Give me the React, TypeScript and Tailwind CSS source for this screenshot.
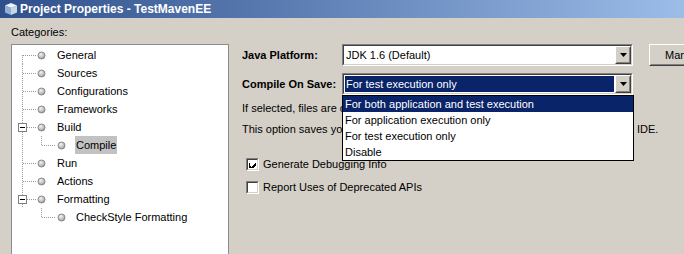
import React from "react";

const FONT = { fontFamily: '"Liberation Sans", Arial, sans-serif' };

function Bullet({ cx }: { cx: number }) {
  return (
    <g>
      <circle cx={cx} cy={9.5} r={3.5} fill="url(#bg)" stroke="#8a8a8a" strokeWidth={1} />
    </g>
  );
}

type Row = {
  label: string;
  level: 0 | 1;
  first?: boolean;
  lastTop?: boolean;
  expand?: boolean;
  parentContinues?: boolean;
  selected?: boolean;
};

const rows: Row[] = [
  { label: "General", level: 0, first: true },
  { label: "Sources", level: 0 },
  { label: "Configurations", level: 0 },
  { label: "Frameworks", level: 0 },
  { label: "Build", level: 0, expand: true },
  { label: "Compile", level: 1, parentContinues: true, selected: true },
  { label: "Run", level: 0 },
  { label: "Actions", level: 0 },
  { label: "Formatting", level: 0, expand: true, lastTop: true },
  { label: "CheckStyle Formatting", level: 1, parentContinues: false },
];

function TreeGlyph({ row }: { row: Row }) {
  const dot = { stroke: "#9a9a9a", strokeWidth: 1, strokeDasharray: "1 1", shapeRendering: "crispEdges" as const };
  if (row.level === 0) {
    return (
      <svg width={44} height={18} className="shrink-0">
        {row.expand ? (
          <>
            {!row.first && <line x1={10.5} y1={0} x2={10.5} y2={5} {...dot} />}
            <line x1={10.5} y1={14} x2={10.5} y2={18} {...dot} />
          </>
        ) : (
          <line x1={10.5} y1={row.first ? 9 : 0} x2={10.5} y2={row.lastTop ? 9 : 18} {...dot} />
        )}
        {row.expand ? (
          <>
            <rect x={6.5} y={5.5} width={8} height={8} fill="white" stroke="#808080" shapeRendering="crispEdges" />
            <line x1={8} y1={9.5} x2={13} y2={9.5} stroke="#000" shapeRendering="crispEdges" />
            <line x1={15} y1={9.5} x2={24} y2={9.5} {...dot} />
          </>
        ) : (
          <line x1={11} y1={9.5} x2={24} y2={9.5} {...dot} />
        )}
        <Bullet cx={29.5} />
      </svg>
    );
  }
  return (
    <svg width={63} height={18} className="shrink-0">
      {row.parentContinues && <line x1={10.5} y1={0} x2={10.5} y2={18} {...dot} />}
      <line x1={29.5} y1={0} x2={29.5} y2={9} {...dot} />
      <line x1={30} y1={9.5} x2={44} y2={9.5} {...dot} />
      <Bullet cx={49.5} />
    </svg>
  );
}

function ArrowButton() {
  return (
    <div className="w-[16px] h-full shrink-0 border border-t-white border-l-white border-b-[#404040] border-r-[#404040] bg-[#d4d0c8]">
      <div className="w-full h-full flex items-center justify-center border border-transparent border-b-[#808080] border-r-[#808080]">
        <svg width={7} height={4}>
          <polygon points="0,0 7,0 3.5,4" fill="#000" />
        </svg>
      </div>
    </div>
  );
}

function Combo({ value, selected, children }: { value: string; selected?: boolean; children?: React.ReactNode }) {
  return (
    <div className="relative shrink-0 w-[291px] h-[22px] border border-t-[#808080] border-l-[#808080] border-b-white border-r-white">
      <div className="flex h-full border border-t-[#404040] border-l-[#404040] border-b-[#d4d0c8] border-r-[#d4d0c8] bg-white">
        <div className="flex-1 flex p-px">
          <div
            className={
              "flex-1 flex items-center pl-[1px] " + (selected ? "bg-[#0a246a] text-white" : "text-black")
            }
          >
            {value}
          </div>
        </div>
        <ArrowButton />
      </div>
      {children}
    </div>
  );
}

function Checkbox({ checked }: { checked?: boolean }) {
  return (
    <div className="w-[13px] h-[13px] shrink-0 border border-t-[#808080] border-l-[#808080] border-b-white border-r-white">
      <div className="w-full h-full bg-white border border-t-[#404040] border-l-[#404040] border-b-[#d4d0c8] border-r-[#d4d0c8] flex items-center justify-center">
        {checked && (
          <svg width={7} height={7} shapeRendering="crispEdges">
            <path d="M0 2h1v3h1v1h1v-1h1v-1h1v-1h1v-1h1v3h-1v1h-1v1h-1v1h-1v1h-1v-1h-1v-1h-1z" fill="#000" />
          </svg>
        )}
      </div>
    </div>
  );
}

export default function App() {
  return (
    <div className="w-[684px] h-[254px] overflow-hidden bg-[#d4d0c8] text-[11px] text-black" style={FONT}>
      <svg width={0} height={0} className="absolute">
        <defs>
          <radialGradient id="bg" cx="0.4" cy="0.35" r="0.7">
            <stop offset="0" stopColor="#f4f4f4" />
            <stop offset="0.6" stopColor="#c0c0c0" />
            <stop offset="1" stopColor="#8e8e8e" />
          </radialGradient>
        </defs>
      </svg>
      {/* Title bar */}
      <div className="h-[18px] flex items-center bg-gradient-to-r from-[#30508c] to-[#9cbde8]">
        <svg width={14} height={14} className="ml-[4px] mr-[2px] shrink-0">
          <polygon points="7,1 13,3.5 7,6 1,3.5" fill="#eef4fb" />
          <polygon points="1,3.5 7,6 7,13 1,10.5" fill="#8fb0d8" />
          <polygon points="13,3.5 7,6 7,13 13,10.5" fill="#c9d6e6" />
        </svg>
        <span className="font-bold text-white text-[12px] whitespace-nowrap">Project Properties - TestMavenEE</span>
      </div>

      <div className="flex">
        {/* Left column */}
        <div className="w-[229px] shrink-0 pl-[11px] pt-[7px]">
          <div className="h-[14px] leading-[14px]">Categories:</div>
          <div className="mt-[5px] h-[220px] bg-white border border-[#8c8c8c] pt-px">
            {rows.map((r) => (
              <div key={r.label} className="h-[18px] flex items-center">
                <TreeGlyph row={r} />
                <span
                  className={
                    "h-[18px] leading-[18px] px-px whitespace-nowrap " + (r.selected ? "bg-[#c2c2c2]" : "")
                  }
                >
                  {r.label}
                </span>
              </div>
            ))}
          </div>
        </div>

        {/* Right column */}
        <div className="ml-[13px] pt-[26px] flex-1 min-w-0">
          <div className="flex items-center h-[22px]">
            <div className="w-[100px] font-bold shrink-0">Java Platform:</div>
            <Combo value="JDK 1.6 (Default)" />
            <div className="ml-[16px] h-[22px] shrink-0 border border-t-white border-l-white border-b-[#404040] border-r-[#404040]">
              <div className="h-full flex items-center pl-[14px] pr-[10px] whitespace-nowrap border border-transparent border-b-[#808080] border-r-[#808080]">
                Manage Platforms...
              </div>
            </div>
          </div>

          <div className="flex items-center h-[22px] mt-[7px] relative z-10">
            <div className="w-[100px] font-bold shrink-0">Compile On Save:</div>
            <Combo value="For test execution only" selected>
              <div className="absolute left-[-1px] top-[21px] w-[292px] border border-black bg-white">
                <div className="h-[16px] leading-[16px] pl-[2px] bg-[#0a246a] text-white">
                  For both application and test execution
                </div>
                <div className="h-[16px] leading-[16px] pl-[2px]">For application execution only</div>
                <div className="h-[16px] leading-[16px] pl-[2px]">For test execution only</div>
                <div className="h-[16px] leading-[16px] pl-[2px]">Disable</div>
              </div>
            </Combo>
          </div>

          <div className="mt-[6px] h-[14px] leading-[14px] whitespace-nowrap">
            If selected, files are compiled when you save them.
          </div>
          <div className="mt-[7px] h-[14px] leading-[14px] whitespace-nowrap flex">
            <span className="w-[395px] shrink-0 overflow-hidden">
              This option saves you time when you run or debug your application in the
            </span>
            <span>IDE.</span>
          </div>

          <div className="mt-[20px] h-[16px] flex items-center pl-[4px] gap-[4px]">
            <Checkbox checked />
            <span className="whitespace-nowrap">Generate Debugging Info</span>
          </div>
          <div className="mt-[7px] h-[16px] flex items-center pl-[4px] gap-[4px]">
            <Checkbox />
            <span className="whitespace-nowrap">Report Uses of Deprecated APIs</span>
          </div>
        </div>
      </div>
    </div>
  );
}
